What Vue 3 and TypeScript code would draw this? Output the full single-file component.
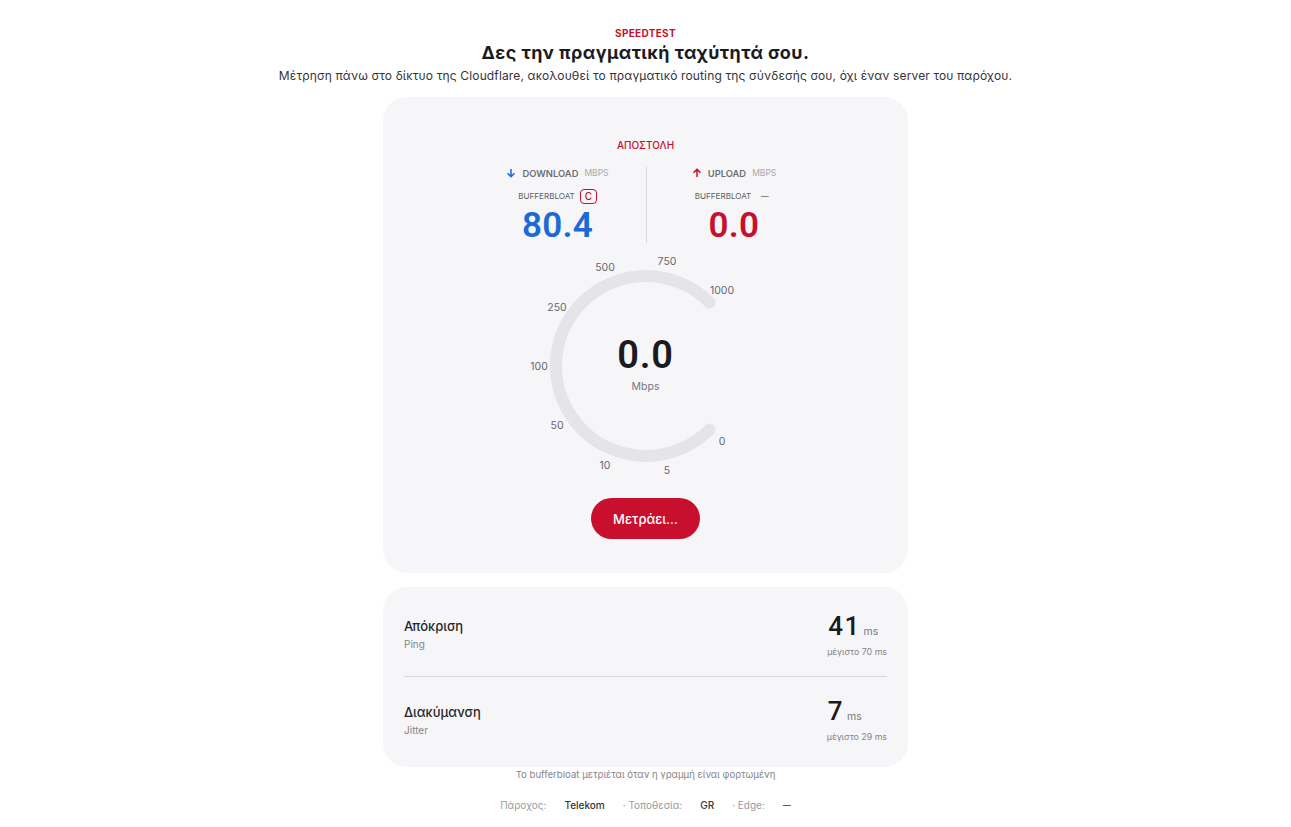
<script setup lang="ts">
const ticks = [
  { label: '0', x: 76, y: 75 },
  { label: '5', x: 21, y: 104 },
  { label: '10', x: -41, y: 99 },
  { label: '50', x: -89, y: 59 },
  { label: '100', x: -107, y: 0 },
  { label: '250', x: -89, y: -59 },
  { label: '500', x: -41, y: -99 },
  { label: '750', x: 21, y: -105 },
  { label: '1000', x: 76, y: -76 },
]
const metrics = [
  { name: 'Απόκριση', sub: 'Ping', value: '41', max: 'μέγιστο 70 ms' },
  { name: 'Διακύμανση', sub: 'Jitter', value: '7', max: 'μέγιστο 29 ms' },
]
</script>

<template>
  <main class="page">
    <header class="head">
      <div class="eyebrow">SPEEDTEST</div>
      <h1>Δες την πραγματική ταχύτητά σου.</h1>
      <p>Μέτρηση πάνω στο δίκτυο της Cloudflare, ακολουθεί το πραγματικό routing της σύνδεσής σου, όχι έναν server του παρόχου.</p>
    </header>

    <section class="card gauge-card">
      <div class="phase">ΑΠΟΣΤΟΛΗ</div>
      <div class="stats">
        <div class="stat">
          <div class="stat-label">
            <svg class="arrow" viewBox="0 0 10 10" width="10" height="10"><path d="M5 1v7.5M1.5 5.2 5 8.6l3.5-3.4" fill="none" stroke="#1a6bd6" stroke-width="1.5" /></svg>
            <span class="dir">DOWNLOAD</span><span class="unit">MBPS</span>
          </div>
          <div class="bb"><span>BUFFERBLOAT</span><span class="grade">C</span></div>
          <div class="big blue">80.4</div>
        </div>
        <div class="stat second">
          <div class="stat-label">
            <svg class="arrow" viewBox="0 0 10 10" width="10" height="10"><path d="M5 9V1.5M1.5 4.8 5 1.4l3.5 3.4" fill="none" stroke="#c8102e" stroke-width="1.5" /></svg>
            <span class="dir">UPLOAD</span><span class="unit">MBPS</span>
          </div>
          <div class="bb"><span>BUFFERBLOAT</span><span class="dash">—</span></div>
          <div class="big red">0.0</div>
        </div>
      </div>

      <div class="gauge">
        <svg viewBox="-130 -120 260 240" width="260" height="240">
          <path d="M63.6 63.6A90 90 0 1 1 63.6 -63.6" fill="none" stroke="#e5e5e9" stroke-width="12" stroke-linecap="round" />
          <text v-for="t in ticks" :key="t.label" :x="t.x" :y="t.y" class="tick" text-anchor="middle" dominant-baseline="central">{{ t.label }}</text>
          <text x="-0.5" y="-11" class="now" text-anchor="middle" dominant-baseline="central">0.0</text>
          <text x="-0.5" y="20" class="now-unit" text-anchor="middle" dominant-baseline="central">Mbps</text>
        </svg>
      </div>

      <button class="go" type="button">Μετράει…</button>
    </section>

    <section class="card metrics">
      <div v-for="m in metrics" :key="m.sub" class="metric">
        <div>
          <div class="m-name">{{ m.name }}</div>
          <div class="m-sub">{{ m.sub }}</div>
        </div>
        <div class="m-right">
          <div class="m-value"><b>{{ m.value }}</b><span>ms</span></div>
          <div class="m-max">{{ m.max }}</div>
        </div>
      </div>
    </section>

    <footer class="foot">
      <div class="note">Το bufferbloat μετριέται όταν η γραμμή είναι φορτωμένη</div>
      <div class="info">
        <span>Πάροχος:</span><strong>Telekom</strong>
        <span>· Τοποθεσία:</span><strong>GR</strong>
        <span>· Edge:</span><strong>—</strong>
      </div>
    </footer>
  </main>
</template>

<style>
html, body { margin: 0; background: #fff; }
</style>

<style scoped>
.page {
  width: 1291px;
  height: 827px;
  overflow: hidden;
  box-sizing: border-box;
  padding-top: 27px;
  display: flex;
  flex-direction: column;
  align-items: center;
  font-family: Inter, "Noto Sans", sans-serif;
  color: #1b1b1f;
}
.head { text-align: center; height: 70px; }
.eyebrow { font-size: 10px; line-height: 12px; font-weight: 700; color: #c8102e; letter-spacing: .3px; }
h1 { margin: 2px 0 0; font-size: 18px; line-height: 24px; font-weight: 700; letter-spacing: .45px; }
.head p { margin: 3px 0 0; font-size: 12px; line-height: 16px; font-weight: 400; color: #33333a; letter-spacing: .14px; white-space: nowrap; }
.card { width: 525px; box-sizing: border-box; background: #f6f6f8; border-radius: 24px; }
.gauge-card { height: 476px; padding-top: 42px; display: flex; flex-direction: column; align-items: center; }
.phase { font-size: 10px; line-height: 12px; font-weight: 500; color: #c8102e; }
.stats { margin-top: 16px; display: grid; grid-template-columns: 176px 176px; height: 76px; }
.stat { display: flex; flex-direction: column; align-items: center; }
.second { border-left: 1px solid #d9d9dd; }
.stat-label { display: flex; align-items: center; height: 14px; margin-top: -1px; }
.arrow { margin-right: 6px; }
.dir { font-size: 9.4px; font-weight: 600; color: #6e6e76; }
.unit { font-size: 8.5px; color: #a8a8ae; margin-left: 6px; }
.bb { display: flex; align-items: center; height: 16px; margin-top: 8px; font-size: 8.1px; color: #5e5e65; font-weight: 400; }
.grade { width: 17px; height: 15px; box-sizing: border-box; margin-left: 5px; border: 1.3px solid #c8102e; border-radius: 4px; color: #c8102e; font-size: 10px; font-weight: 500; display: flex; align-items: center; justify-content: center; }
.dash { width: 17px; margin-left: 5px; text-align: center; font-size: 8px; }
.big { font-family: Roboto, Inter, sans-serif; font-size: 35px; line-height: 34px; font-weight: 600; letter-spacing: .3px; margin-top: 5px; }
.blue { color: #1a6bd6; }
.red { color: #c8102e; }
.gauge { margin-top: 3px; height: 240px; }
.gauge svg { display: block; }
.tick { font-size: 10.5px; fill: #66666e; font-family: Inter, sans-serif; }
.now { font-family: Roboto, Inter, sans-serif; font-size: 38px; font-weight: 600; fill: #1b1b1f; letter-spacing: .8px; }
.now-unit { font-size: 10.5px; fill: #77777e; font-family: Inter, sans-serif; }
.go { margin-top: 12px; width: 109px; height: 41px; border: 0; border-radius: 21px; background: #c8102e; color: #fff; font: 500 13px Inter, sans-serif; }
.metrics { margin-top: 14px; height: 180px; padding: 0 21px; }
.metric { height: 90px; box-sizing: border-box; display: flex; align-items: center; justify-content: space-between; border-bottom: 1px solid #d9d9dd; }
.metric:first-child { padding-top: 5px; }
.metric:last-child { border-bottom: 0; padding-bottom: 5px; }
.m-name { font-size: 13px; line-height: 18px; font-weight: 500; color: #26262b; }
.m-sub { font-size: 10px; line-height: 14px; margin-top: 2px; color: #85858c; }
.m-value { display: flex; align-items: flex-end; height: 30px; padding-left: 1px; }
.m-value b { font-family: Roboto, Inter, sans-serif; font-size: 26px; line-height: 30px; font-weight: 500; letter-spacing: 1.4px; }
.m-value span { font-size: 10.5px; line-height: 18px; color: #77777e; margin-left: 3px; }
.m-max { font-size: 8.8px; line-height: 12px; margin-top: 5px; color: #85858c; }
.foot { text-align: center; }
.note { font-size: 9.6px; line-height: 14px; margin-top: 1px; color: #85858c; }
.info { margin-top: 16px; display: flex; align-items: center; justify-content: center; font-size: 10px; line-height: 14px; color: #9a9aa1; }
.info strong { font-weight: 500; color: #33333a; margin: 0 18px; }
.info strong:last-child { margin-right: 0; font-size: 8px; }
</style>
